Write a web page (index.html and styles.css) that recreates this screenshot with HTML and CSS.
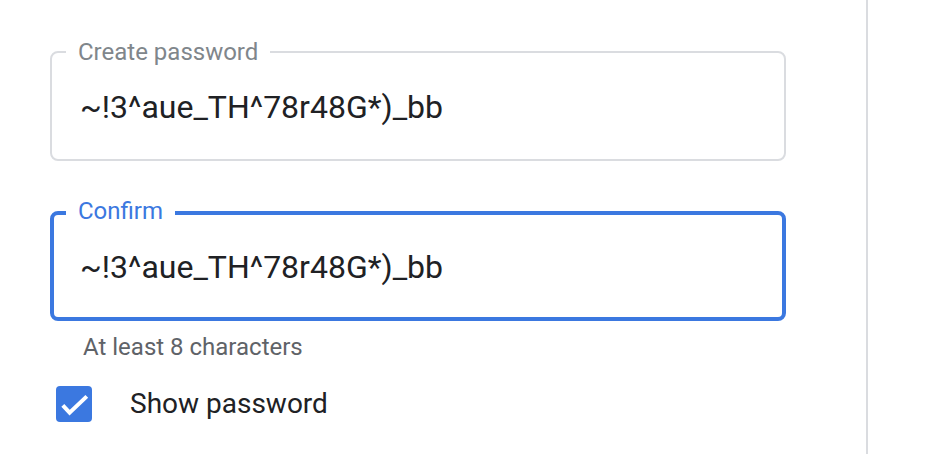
FILE: index.html
```html
<!DOCTYPE html>
<html lang="en">
<head>
<meta charset="utf-8">
<title>Create password</title>
<link rel="stylesheet" href="styles.css">
</head>
<body>
<div class="page">
  <main class="form">
    <div class="field">
      <span class="field-label">Create password</span>
      <div class="field-value">~!3^aue_TH^78r48G*)_bb</div>
    </div>
    <div class="field field--focused">
      <span class="field-label">Confirm</span>
      <div class="field-value">~!3^aue_TH^78r48G*)_bb</div>
    </div>
    <div class="helper">At least 8 characters</div>
    <label class="check-row">
      <span class="checkbox">
        <svg width="36" height="36" viewBox="0 0 36 36" aria-hidden="true">
          <polyline points="6.8,19.4 13.6,26.6 30.8,10.4" fill="none" stroke="#fff" stroke-width="4" stroke-linecap="butt" stroke-linejoin="miter"/>
        </svg>
      </span>
      <span class="check-text">Show password</span>
    </label>
  </main>
  <aside class="side"></aside>
</div>
</body>
</html>
```

FILE: styles.css
```css
* { box-sizing: border-box; }

html, body {
  margin: 0;
  padding: 0;
  background: #ffffff;
}

body {
  font-family: Roboto, "Noto Sans", Arial, sans-serif;
  color: #202124;
}

.page {
  display: flex;
  height: 454px;
  overflow: hidden;
}

.form {
  width: 866px;
  flex: none;
  padding: 51px 0 0 50px;
  display: flex;
  flex-direction: column;
}

.side {
  flex: 1;
  border-left: 2px solid #dadce0;
}

.field {
  position: relative;
  width: 736px;
  height: 110px;
  border: 2px solid #dadce0;
  border-radius: 8px;
  padding: 36px 0 0 28px;
}

.field + .field {
  margin-top: 50px;
}

.field-label {
  position: absolute;
  left: 14px;
  top: -13px;
  padding: 0 12px;
  background: #ffffff;
  font-size: 24px;
  line-height: 24px;
  color: #80868b;
}

.field-value {
  font-size: 32px;
  line-height: 36px;
  color: #202124;
  white-space: nowrap;
}

.field--focused {
  border: 4px solid #3b78e0;
  padding: 34px 0 0 26px;
}

.field--focused .field-label {
  left: 12px;
  top: -16px;
  color: #3b78e0;
}

.helper {
  margin-top: 12px;
  padding-left: 33px;
  font-size: 24px;
  line-height: 28px;
  color: #5f6368;
}

.check-row {
  margin-top: 25px;
  margin-left: 6px;
  display: flex;
  align-items: center;
  gap: 38px;
}

.checkbox {
  width: 36px;
  height: 36px;
  border-radius: 4px;
  background: #3b78e0;
  display: block;
  flex: none;
}

.checkbox svg {
  display: block;
}

.check-text {
  font-size: 28px;
  line-height: 36px;
  color: #202124;
}
```
